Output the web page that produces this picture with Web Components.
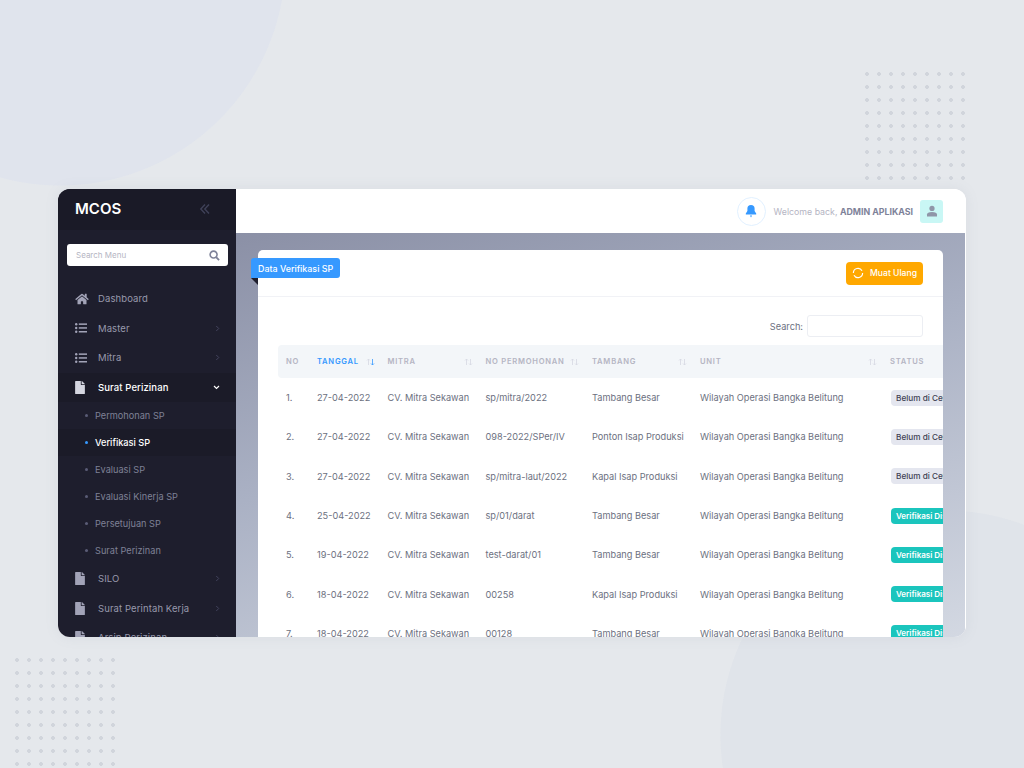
<!DOCTYPE html>
<html lang="id">
<head>
<meta charset="utf-8">
<title>MCOS</title>
<style>
  html, body { margin: 0; height: 100%; overflow: hidden; }
  body {
    box-sizing: border-box;
    padding: 189px 58px 0;
    font-family: "Inter", "Noto Sans", sans-serif;
    background:
      radial-gradient(circle 226px at 60px -40px, #e0e4ed 99.6%, transparent 100%),
      radial-gradient(circle 225px at 945px 735px, #e0e4ea 99.6%, transparent 100%),
      #e5e8ec;
  }
</style>
</head>
<body>
<dot-grid style="left:865px;top:72px"></dot-grid>
<dot-grid style="left:15px;top:658px"></dot-grid>

<app-window>
  <side-bar slot="side">
    <side-item icon="home" label="Dashboard"></side-item>
    <side-item icon="list" label="Master" arrow="right"></side-item>
    <side-item icon="list" label="Mitra" arrow="right"></side-item>
    <side-item icon="file" label="Surat Perizinan" arrow="down" open></side-item>
    <sub-item label="Permohonan SP"></sub-item>
    <sub-item label="Verifikasi SP" active></sub-item>
    <sub-item label="Evaluasi SP"></sub-item>
    <sub-item label="Evaluasi Kinerja SP"></sub-item>
    <sub-item label="Persetujuan SP"></sub-item>
    <sub-item label="Surat Perizinan"></sub-item>
    <side-item icon="file" label="SILO" arrow="right"></side-item>
    <side-item icon="file" label="Surat Perintah Kerja" arrow="right"></side-item>
    <side-item icon="file" label="Arsip Perizinan" arrow="right"></side-item>
  </side-bar>
  <top-bar slot="top"></top-bar>
  <data-card title="Data Verifikasi SP">
    <data-table></data-table>
  </data-card>
</app-window>

<script>
// ikon dipakai bersama oleh beberapa komponen
const ICONS = {
  home: '<svg viewBox="0 0 576 512" width="14" height="12"><path fill="currentColor" d="M280.37 148.26L96 300.11V464a16 16 0 0 0 16 16l112.06-.29a16 16 0 0 0 15.92-16V368a16 16 0 0 1 16-16h64a16 16 0 0 1 16 16v95.64a16 16 0 0 0 16 16.05L464 480a16 16 0 0 0 16-16V300L295.67 148.26a12.19 12.19 0 0 0-15.3 0zM571.6 251.47L488 182.56V44.05a12 12 0 0 0-12-12h-56a12 12 0 0 0-12 12v72.61L318.47 43a48 48 0 0 0-61 0L4.34 251.47a12 12 0 0 0-1.6 16.9l25.5 31A12 12 0 0 0 45.15 301l235.22-193.74a12.19 12.19 0 0 1 15.3 0L530.9 301a12 12 0 0 0 16.9-1.6l25.5-31a12 12 0 0 0-1.7-16.93z"/></svg>',
  list: '<svg viewBox="0 0 12 10" width="12" height="10"><g fill="currentColor"><circle cx="1.2" cy="1.2" r="1.2"/><circle cx="1.2" cy="5" r="1.2"/><circle cx="1.2" cy="8.8" r="1.2"/><rect x="3.8" y=".4" width="8.2" height="1.5"/><rect x="3.8" y="4.2" width="8.2" height="1.5"/><rect x="3.8" y="8" width="8.2" height="1.5"/></g></svg>',
  file: '<svg viewBox="0 0 384 512" width="10" height="13"><path fill="currentColor" d="M224 136V0H24C10.7 0 0 10.7 0 24v464c0 13.3 10.7 24 24 24h336c13.3 0 24-10.7 24-24V160H248c-13.2 0-24-10.8-24-24zm160-14.1v6.1H256V0h6.1c6.4 0 12.5 2.5 17 7l97.9 98c4.5 4.5 7 10.6 7 16.9z"/></svg>',
  right: '<svg viewBox="0 0 6 8" width="5" height="7"><path d="M1.5 1l3 3-3 3" fill="none" stroke="currentColor" stroke-width="1"/></svg>',
  down: '<svg viewBox="0 0 8 6" width="7" height="5"><path d="M1 1.2l3 3 3-3" fill="none" stroke="currentColor" stroke-width="1.4"/></svg>'
};

// titik-titik dekorasi di latar
class DotGrid extends HTMLElement {
  constructor() {
    super();
    this.attachShadow({ mode: 'open' }).innerHTML = `
      <style>
        :host {
          display: block;
          position: absolute;
          width: 108px;
          height: 117px;
          background-image: radial-gradient(circle at 2px 2px, #d1d5dc 1.6px, transparent 2.2px);
          background-size: 12px 13px;
        }
      </style>`;
  }
}

class AppWindow extends HTMLElement {
  constructor() {
    super();
    this.attachShadow({ mode: 'open' }).innerHTML = `
      <style>
        :host {
          display: flex;
          position: relative;
          width: 908px;
          height: 448px;
          background: #fff;
          border-radius: 12px;
          overflow: hidden;
          box-shadow: 0 0 14px rgba(120,130,150,.1);
        }
        .main { flex: 1; min-width: 0; display: flex; flex-direction: column; border-right: 1px solid #fff; }
        .content {
          flex: 1;
          min-height: 0;
          overflow: hidden;
          padding: 17px 22px 0;
          background: linear-gradient(165deg, #8b90a6 0%, #aab1c4 45%, #d3d8e2 100%);
        }
      </style>
      <slot name="side"></slot>
      <div class="main">
        <slot name="top"></slot>
        <div class="content"><slot></slot></div>
      </div>`;
  }
}

class SideBar extends HTMLElement {
  constructor() {
    super();
    this.attachShadow({ mode: 'open' }).innerHTML = `
      <style>
        :host { display: block; flex: none; width: 178px; height: 100%; background: #1e1e2d; overflow: hidden; }
        .brand {
          height: 41px;
          display: flex;
          align-items: center;
          justify-content: space-between;
          padding: 0 25px 2px 17px;
          box-sizing: border-box;
          background: #1a1a27;
          color: #fff;
          font-size: 15px;
          font-weight: 600;
        }
        .brand svg { color: #3f4158; }
        .search {
          margin: 14px 8px 18px 9px;
          height: 22px;
          background: #fff;
          border-radius: 3px;
          display: flex;
          align-items: center;
          justify-content: space-between;
          padding: 0 8px 0 9px;
          font-size: 8px;
          color: #b5b5c3;
        }
        .search svg { color: #7e8299; }
      </style>
      <div class="brand">
        <span>MCOS</span>
        <svg viewBox="0 0 12 12" width="12" height="12"><path d="M6 1.5L1.8 6 6 10.5M10 1.5L5.8 6 10 10.5" fill="none" stroke="currentColor" stroke-width="1.4"/></svg>
      </div>
      <div class="search">
        <span>Search Menu</span>
        <svg viewBox="0 0 12 12" width="11" height="11"><circle cx="5" cy="5" r="3.8" fill="none" stroke="currentColor" stroke-width="1.7"/><path d="M7.8 7.8L11 11" stroke="currentColor" stroke-width="2"/></svg>
      </div>
      <slot></slot>`;
  }
}

class SideItem extends HTMLElement {
  connectedCallback() {
    const icon = this.getAttribute('icon');
    const arrow = this.getAttribute('arrow');
    const open = this.hasAttribute('open');
    this.attachShadow({ mode: 'open' }).innerHTML = `
      <style>
        :host {
          display: flex;
          align-items: center;
          height: 29.5px;
          padding: 0 16px 0 17px;
          font-size: 9.5px;
          color: ${open ? '#fff' : '#9899ac'};
          background: ${open ? '#1b1b28' : 'transparent'};
          font-weight: ${open ? 500 : 400};
        }
        .icon { width: 23px; flex: none; display: flex; color: ${open ? '#d5d6e0' : '#a2a3b7'}; }
        .label { flex: 1; white-space: nowrap; letter-spacing: .1px; }
        .arrow { display: flex; color: ${open ? '#fff' : '#494b66'}; }
      </style>
      <span class="icon">${ICONS[icon]}</span>
      <span class="label">${this.getAttribute('label')}</span>
      <span class="arrow">${arrow ? ICONS[arrow] : ''}</span>`;
  }
}

class SubItem extends HTMLElement {
  connectedCallback() {
    const active = this.hasAttribute('active');
    this.attachShadow({ mode: 'open' }).innerHTML = `
      <style>
        :host {
          display: flex;
          align-items: center;
          height: 27px;
          padding-left: 27px;
          font-size: 9.2px;
          color: ${active ? '#fff' : '#7e8196'};
          background: ${active ? '#1b1b28' : 'transparent'};
          font-weight: ${active ? 500 : 400};
        }
        .dot {
          width: 3px;
          height: 3px;
          border-radius: 50%;
          margin-right: 7px;
          background: ${active ? '#3699ff' : '#5a5c76'};
        }
      </style>
      <span class="dot"></span><span>${this.getAttribute('label')}</span>`;
  }
}

class TopBar extends HTMLElement {
  constructor() {
    super();
    this.attachShadow({ mode: 'open' }).innerHTML = `
      <style>
        :host {
          display: flex;
          flex: none;
          align-items: center;
          justify-content: flex-end;
          height: 44px;
          padding: 0 22px 0 0;
          background: #fff;
          font-size: 8.8px;
          color: #b5b5c3;
        }
        .bell {
          width: 27px;
          height: 27px;
          border: 1px solid #e1f0ff;
          border-radius: 50%;
          display: flex;
          align-items: center;
          justify-content: center;
          color: #3699ff;
          margin-right: 8px;
        }
        b { color: #7e8299; font-weight: 700; }
        .avatar {
          width: 23px;
          height: 23px;
          margin-left: 7px;
          background: #c9f7f5;
          border-radius: 3px;
          display: flex;
          align-items: center;
          justify-content: center;
          color: #8f96a8;
        }
      </style>
      <span class="bell">
        <svg viewBox="0 0 12 14" width="12" height="14"><path fill="currentColor" d="M6 1a3.6 3.6 0 0 0-3.6 3.6V7L.8 9.6v1h10.4v-1L9.6 7V4.6A3.6 3.6 0 0 0 6 1z"/><path fill="currentColor" d="M4.9 11.4h2.2L6 13.4z"/></svg>
      </span>
      <span>Welcome back, <b>ADMIN APLIKASI</b></span>
      <span class="avatar">
        <svg viewBox="0 0 12 12" width="12" height="12"><circle cx="6" cy="3.4" r="2.6" fill="currentColor"/><path fill="currentColor" d="M1 11.4V9.6C1 8 2.6 7 6 7s5 1 5 2.6v1.8z"/></svg>
      </span>`;
  }
}

class DataCard extends HTMLElement {
  connectedCallback() {
    this.attachShadow({ mode: 'open' }).innerHTML = `
      <style>
        :host { display: block; position: relative; background: #fff; border-radius: 5px; }
        .head {
          height: 47px;
          box-sizing: border-box;
          border-bottom: 1px solid #f1f2f6;
          display: flex;
          align-items: center;
          justify-content: flex-end;
          padding: 0 20px;
        }
        /* pita judul menonjol keluar dari kartu */
        .ribbon {
          position: absolute;
          left: -7px;
          top: 8px;
          height: 20px;
          padding: 0 7px;
          display: flex;
          align-items: center;
          background: #3699ff;
          color: #fff;
          font-size: 8.9px;
          font-weight: 500;
          border-radius: 3px 3px 3px 0;
        }
        .ribbon::after {
          content: "";
          position: absolute;
          left: 0;
          top: 100%;
          border-top: 7px solid #1e1e2d;
          border-left: 7px solid transparent;
        }
        .reload {
          height: 23px;
          width: 77px;
          box-sizing: border-box;
          display: flex;
          align-items: center;
          justify-content: center;
          gap: 6px;
          background: #ffa800;
          color: #fff;
          border-radius: 4px;
          font-size: 8.6px;
          font-weight: 500;
        }
        .body { padding: 18px 0 0 20px; overflow: hidden; }
        .search {
          display: flex;
          align-items: center;
          justify-content: flex-end;
          gap: 4px;
          padding-right: 20px;
          margin-bottom: 8px;
          font-size: 9.2px;
          color: #6c7080;
        }
        .search i { display: block; width: 114px; height: 20px; border: 1px solid #eceef3; border-radius: 3px; }
      </style>
      <div class="ribbon">${this.getAttribute('title')}</div>
      <div class="head">
        <span class="reload">
          <svg viewBox="0 0 12 12" width="12" height="12"><path d="M10.6 6A4.6 4.6 0 0 1 2 8.3M1.4 6A4.6 4.6 0 0 1 10 3.7" fill="none" stroke="#fff" stroke-width="1.2"/></svg>
          Muat Ulang
        </span>
      </div>
      <div class="body">
        <div class="search"><span>Search:</span><i></i></div>
        <slot></slot>
      </div>`;
  }
}

const ROWS = [
  ['27-04-2022', 'sp/mitra/2022', 'Tambang Besar', 0],
  ['27-04-2022', '098-2022/SPer/IV', 'Ponton Isap Produksi', 0],
  ['27-04-2022', 'sp/mitra-laut/2022', 'Kapal Isap Produksi', 0],
  ['25-04-2022', 'sp/01/darat', 'Tambang Besar', 1],
  ['19-04-2022', 'test-darat/01', 'Tambang Besar', 1],
  ['18-04-2022', '00258', 'Kapal Isap Produksi', 1],
  ['18-04-2022', '00128', 'Tambang Besar', 1]
];

class DataTable extends HTMLElement {
  connectedCallback() {
    const sort = (on) => `<svg class="sort" viewBox="0 0 9 8" width="9" height="8"><path d="M2.5 7V1M1 2.5L2.5 1 4 2.5" fill="none" stroke="#d5d8e2" stroke-width=".8"/><path d="M6.5 1v6M5 5.5L6.5 7 8 5.5" fill="none" stroke="${on ? '#3699ff' : '#d5d8e2'}" stroke-width=".8"/></svg>`;
    const heads = [['NO'], ['TANGGAL', 1], ['MITRA', 0], ['NO PERMOHONAN', 0], ['TAMBANG', 0], ['UNIT', 0], ['STATUS']];
    this.attachShadow({ mode: 'open' }).innerHTML = `
      <style>
        :host { display: block; width: 720px; font-size: 9.2px; color: #6c7080; }
        table { width: 720px; table-layout: fixed; border-collapse: separate; border-spacing: 0; }
        th {
          height: 33px;
          padding: 0 8px;
          background: #f3f6f9;
          text-align: left;
          font-size: 7.6px;
          font-weight: 600;
          letter-spacing: .75px;
          color: #b5b5c3;
          white-space: nowrap;
          position: relative;
        }
        th.on { color: #3699ff; }
        th:first-child { border-radius: 4px 0 0 4px; }
        .sort { position: absolute; right: 5px; top: 13px; }
        td { height: 39.3px; padding: 0 8px; white-space: nowrap; overflow: hidden; }
        td.st { padding-left: 9px; overflow: visible; }
        .badge {
          display: inline-block;
          height: 16px;
          line-height: 16px;
          padding: 0 5px;
          border-radius: 4px;
          font-size: 8.2px;
          font-weight: 500;
          background: #e4e6ef;
          color: #3f4254;
        }
        .badge.ok { background: #1bc5bd; color: #fff; font-weight: 600; font-size: 8px; }
      </style>
      <table>
        <colgroup><col style="width:31px"><col style="width:70.5px"><col style="width:98px"><col style="width:106.5px"><col style="width:108px"><col style="width:190px"><col style="width:116px"></colgroup>
        <thead><tr>${heads.map(h => `<th class="${h[1] ? 'on' : ''}">${h[0]}${h.length > 1 ? sort(h[1]) : ''}</th>`).join('')}</tr></thead>
        <tbody>${ROWS.map((r, i) => `<tr>
          <td>${i + 1}.</td><td>${r[0]}</td><td>CV. Mitra Sekawan</td><td>${r[1]}</td><td>${r[2]}</td>
          <td>Wilayah Operasi Bangka Belitung</td>
          <td class="st"><span class="badge ${r[3] ? 'ok' : ''}">${r[3] ? 'Verifikasi Disetujui' : 'Belum di Cek'}</span></td>
        </tr>`).join('')}</tbody>
      </table>`;
  }
}

customElements.define('dot-grid', DotGrid);
customElements.define('app-window', AppWindow);
customElements.define('side-bar', SideBar);
customElements.define('side-item', SideItem);
customElements.define('sub-item', SubItem);
customElements.define('top-bar', TopBar);
customElements.define('data-card', DataCard);
customElements.define('data-table', DataTable);
</script>
</body>
</html>
